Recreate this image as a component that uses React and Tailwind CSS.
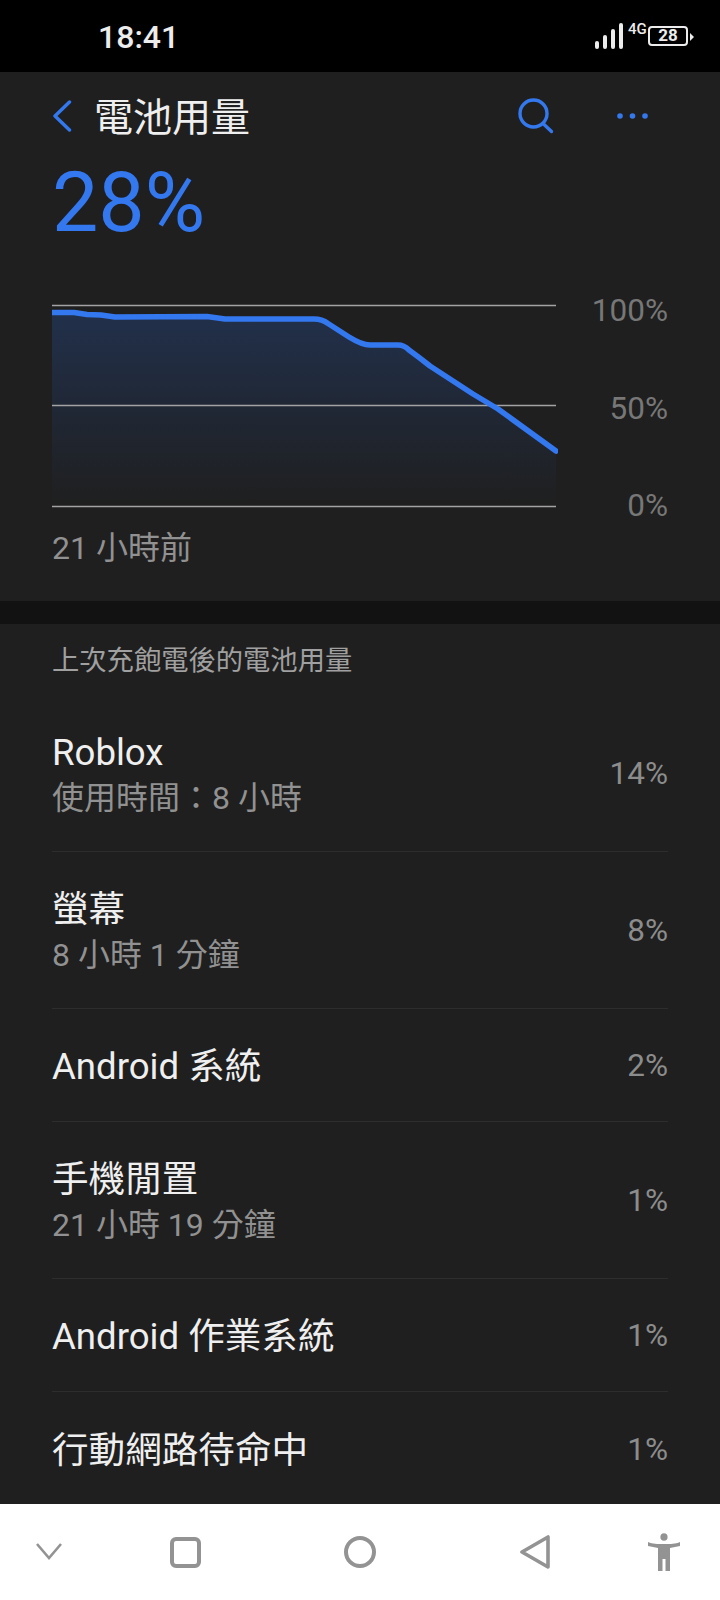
const rows = [
  { name: "Roblox", sub: "使用時間：8 小時", pct: "14%" },
  { name: "螢幕", sub: "8 小時 1 分鐘", pct: "8%" },
  { name: "Android 系統", pct: "2%" },
  { name: "手機閒置", sub: "21 小時 19 分鐘", pct: "1%" },
  { name: "Android 作業系統", pct: "1%" },
  { name: "行動網路待命中", pct: "1%" },
];

const line =
  "M0 12.5 L22 12.5 L35 14.5 L49 15 L63 17 L155 16.5 L173 19 L262 19 Q270 19 276 23.5 L297 37 Q310 45 318 45 L346 45 Q352 45 357 50 Q368 58 378 66 L421 94 L446 109 L504 151";

const StatusBar = () => (
  <div className="h-[72px] shrink-0 bg-black flex items-center pl-[98px] pr-[26px] justify-between">
    <span className="text-[32px] leading-none font-medium text-[#ececec] mt-[2px]">18:41</span>
    <div className="flex items-start h-[26px] mt-[-1px] text-[#ececec]">
      <svg width="30" height="26" viewBox="0 0 30 26" fill="#ececec">
        <rect x="0" y="18" width="4" height="8" rx="2" />
        <rect x="8" y="12" width="4" height="14" rx="2" />
        <rect x="16" y="6" width="4" height="20" rx="2" />
        <rect x="24" y="0" width="4" height="26" rx="2" />
      </svg>
      <span className="text-[15px] leading-[13px] ml-[3px] w-[19px] font-medium">4G</span>
      <div className="w-[40px] h-[20px] mt-[3px] ml-[1px] border-2 border-[#ececec] rounded-[4px] flex items-center justify-center text-[17px] leading-none font-bold">
        28
      </div>
      <div className="w-0 h-0 mt-[10px] ml-[2px] border-y-[4px] border-y-transparent border-l-[4px] border-l-[#ececec]" />
    </div>
  </div>
);

const Header = () => (
  <div className="h-[88px] flex items-center pl-[52px] pr-[71px]">
    <svg width="20" height="32" viewBox="0 0 20 32" fill="none" stroke="#3478ee" strokeWidth="3.4" strokeLinecap="round" strokeLinejoin="round">
      <path d="M17.5 2 L3 16 L17.5 30" />
    </svg>
    <h1 className="ml-[22px] mt-[4px] text-[39px] leading-none font-normal text-[#efefef]">電池用量</h1>
    <svg className="ml-auto" width="36" height="36" viewBox="0 0 36 36" fill="none" stroke="#3478ee" strokeWidth="3.4" strokeLinecap="round">
      <circle cx="15.5" cy="15.5" r="13.5" />
      <path d="M25 25.5 L33.5 33.5" />
    </svg>
    <svg className="ml-[63px]" width="32" height="6" viewBox="0 0 32 6" fill="#3478ee">
      <circle cx="3" cy="3" r="2.8" />
      <circle cx="15.5" cy="3" r="2.8" />
      <circle cx="28" cy="3" r="2.8" />
    </svg>
  </div>
);

const Chart = () => (
  <div className="flex mt-[56px] pl-[52px] pr-[52px]">
    <svg width="506" height="212" viewBox="0 0 506 212" fill="none" className="shrink-0">
      <defs>
        <linearGradient id="fade" x1="0" y1="0" x2="0" y2="1">
          <stop offset="0" stopColor="#21304b" />
          <stop offset="1" stopColor="#1f1f1f" />
        </linearGradient>
      </defs>
      <path d={`${line} L504 206 L0 206 Z`} fill="url(#fade)" />
      <path d="M0 5.5 H504 M0 105.5 H504 M0 206.5 H504" stroke="#a3a3a3" strokeWidth="1.6" />
      <path d={line} stroke="#3478f0" strokeWidth="5.5" strokeLinecap="round" strokeLinejoin="round" />
    </svg>
    <div className="flex-1 flex flex-col justify-between items-end text-[31.5px] leading-[34px] text-[#777777] mt-[-6px] mb-[-11px]">
      <span>100%</span>
      <span>50%</span>
      <span>0%</span>
    </div>
  </div>
);

const Row = ({ name, sub, pct, last }) => (
  <div className={`flex items-center justify-between ${sub ? "h-[157px]" : "h-[113px]"} ${last ? "" : "border-b border-[#2d2d2d]"}`}>
    <div className="flex flex-col mt-[4px]">
      <span className="text-[36.6px] leading-[46px] text-[#efefef]">{name}</span>
      {sub && <span className="text-[32px] leading-[44px] text-[#919191]">{sub}</span>}
    </div>
    <span className="text-[31.5px] leading-none text-[#8c8c8c] mt-[2px]">{pct}</span>
  </div>
);

const NavBar = () => (
  <div className="h-[96px] shrink-0 bg-white flex items-center pl-[36px]">
    <svg width="26" height="20" viewBox="0 0 26 20" fill="none" stroke="#939393" strokeWidth="2.6">
      <path d="M1 2 L13 16 L25 2" />
    </svg>
    <div className="w-[31px] h-[31px] border-4 border-[#939393] rounded-[6px] ml-[108px]" />
    <div className="w-[32px] h-[32px] border-4 border-[#939393] rounded-full ml-[143px]" />
    <svg className="ml-[144px]" width="30" height="34" viewBox="0 0 30 34" fill="none" stroke="#939393" strokeWidth="3.6" strokeLinejoin="round">
      <path d="M2 17 L28 2 V32 Z" />
    </svg>
    <svg className="ml-[98px]" width="32" height="38" viewBox="0 0 32 38" fill="#939393">
      <ellipse cx="16" cy="4" rx="3.6" ry="3.8" />
      <path d="M0 9 C5 11 9 11 16 11 C23 11 27 11 32 9 L32 13 L22 15 V38 H17.5 V26 H14.5 V38 H10 V15 L0 13 Z" />
    </svg>
  </div>
);

export default function App() {
  return (
    <div
      className="w-[720px] h-[1600px] flex flex-col overflow-hidden bg-[#1f1f1f]"
      style={{ fontFamily: 'Roboto, "Noto Sans CJK TC", sans-serif' }}
    >
      <StatusBar />
      <div className="flex-1 min-h-0 overflow-hidden">
        <div className="h-[529px]">
          <Header />
          <div className="text-[82.5px] leading-[82px] text-[#3478f0] pl-[52px] mt-[2px] font-normal">28%</div>
          <Chart />
          <div className="pl-[52px] mt-[14px] text-[32px] leading-[44px] text-[#919191]">21 小時前</div>
        </div>
        <div className="h-[23px] bg-[#121212]" />
        <div className="px-[52px]">
          <div className="h-[71px] pt-[17px] text-[27.3px] leading-[40px] text-[#a0a0a0]">上次充飽電後的電池用量</div>
          {rows.map((r, i) => (
            <Row key={r.name} {...r} last={i === rows.length - 1} />
          ))}
        </div>
      </div>
      <NavBar />
    </div>
  );
}
